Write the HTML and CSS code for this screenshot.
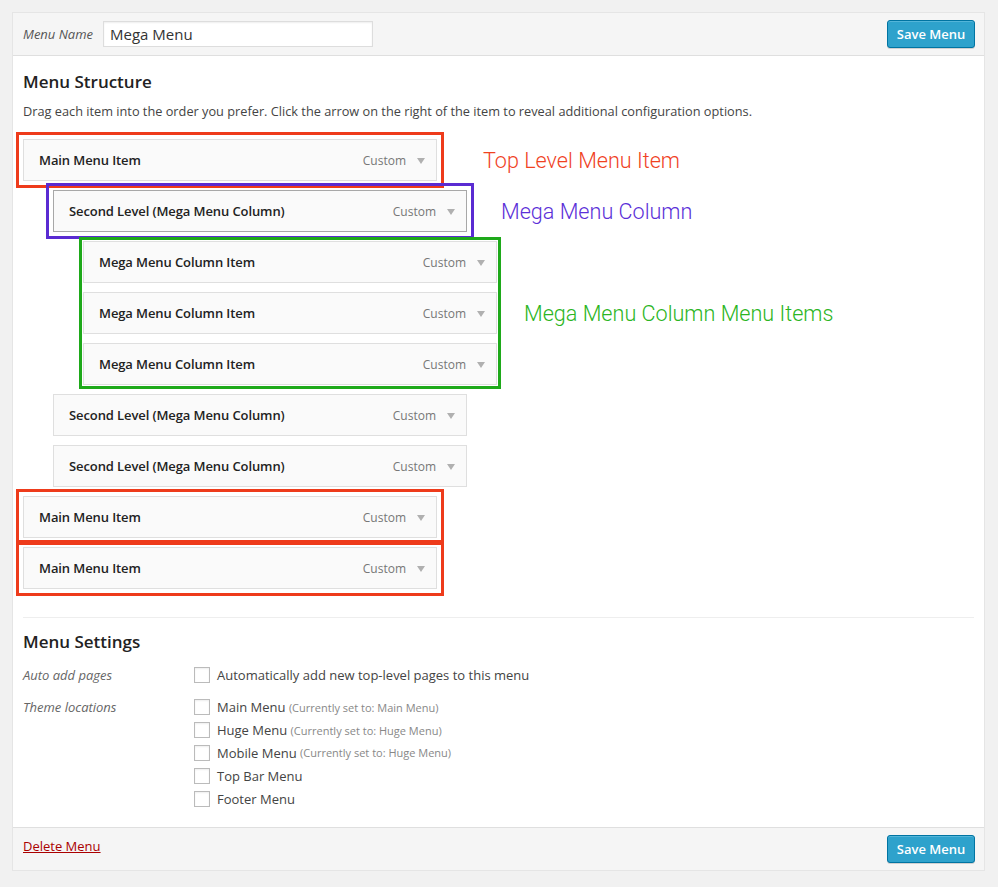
FILE: index.html
```html
<!DOCTYPE html>
<html>
<head>
<meta charset="utf-8">
<title>Menus</title>
<link rel="stylesheet" href="styles.css">
</head>
<body>
<div class="panel">
  <div class="panel-header">
    <div class="name-field">
      <label class="name-label">Menu Name</label>
      <input class="name-input" type="text" value="Mega Menu">
    </div>
    <button class="btn-primary">Save Menu</button>
  </div>

  <div class="panel-body">
    <h3 class="section-title">Menu Structure</h3>
    <p class="desc">Drag each item into the order you prefer. Click the arrow on the right of the item to reveal additional configuration options.</p>

    <div class="menu-list">
      <div class="row">
        <div class="anno anno-red">
          <div class="item"><span class="item-title">Main Menu Item</span><span class="item-type">Custom</span><span class="arrow"></span></div>
        </div>
        <span class="anno-label label-red">Top Level Menu Item</span>
      </div>

      <div class="row depth-1">
        <div class="anno anno-purple">
          <div class="item item-active"><span class="item-title">Second Level (Mega Menu Column)</span><span class="item-type">Custom</span><span class="arrow"></span></div>
        </div>
        <span class="anno-label label-purple">Mega Menu Column</span>
      </div>

      <div class="row depth-2">
        <div class="anno anno-green group">
          <div class="item"><span class="item-title">Mega Menu Column Item</span><span class="item-type">Custom</span><span class="arrow"></span></div>
          <div class="item"><span class="item-title">Mega Menu Column Item</span><span class="item-type">Custom</span><span class="arrow"></span></div>
          <div class="item"><span class="item-title">Mega Menu Column Item</span><span class="item-type">Custom</span><span class="arrow"></span></div>
        </div>
        <span class="anno-label label-green">Mega Menu Column Menu Items</span>
      </div>

      <div class="row depth-1">
        <div class="item"><span class="item-title">Second Level (Mega Menu Column)</span><span class="item-type">Custom</span><span class="arrow"></span></div>
      </div>
      <div class="row depth-1">
        <div class="item"><span class="item-title">Second Level (Mega Menu Column)</span><span class="item-type">Custom</span><span class="arrow"></span></div>
      </div>

      <div class="row">
        <div class="anno anno-red">
          <div class="item"><span class="item-title">Main Menu Item</span><span class="item-type">Custom</span><span class="arrow"></span></div>
        </div>
      </div>
      <div class="row">
        <div class="anno anno-red">
          <div class="item"><span class="item-title">Main Menu Item</span><span class="item-type">Custom</span><span class="arrow"></span></div>
        </div>
      </div>
    </div>

    <div class="settings">
      <h3 class="section-title">Menu Settings</h3>
      <div class="setting-row setting-auto">
        <div class="setting-label">Auto add pages</div>
        <div class="setting-options">
          <label class="opt"><input type="checkbox" class="cb">Automatically add new top-level pages to this menu</label>
        </div>
      </div>
      <div class="setting-row">
        <div class="setting-label">Theme locations</div>
        <div class="setting-options">
          <label class="opt"><input type="checkbox" class="cb">Main Menu <span class="note">(Currently set to: Main Menu)</span></label>
          <label class="opt"><input type="checkbox" class="cb">Huge Menu <span class="note">(Currently set to: Huge Menu)</span></label>
          <label class="opt"><input type="checkbox" class="cb">Mobile Menu <span class="note">(Currently set to: Huge Menu)</span></label>
          <label class="opt"><input type="checkbox" class="cb">Top Bar Menu</label>
          <label class="opt"><input type="checkbox" class="cb">Footer Menu</label>
        </div>
      </div>
    </div>
  </div>

  <div class="panel-footer">
    <a class="delete-link" href="#">Delete Menu</a>
    <button class="btn-primary">Save Menu</button>
  </div>
</div>
</body>
</html>
```

FILE: styles.css
```css
* { box-sizing: border-box; }

body {
  margin: 12px 13px 0 12px;
  background: #f1f1f1;
  font-family: "Open Sans", "Liberation Sans", sans-serif;
  font-size: 13px;
  color: #444;
}

.panel {
  background: #fff;
  border: 1px solid #e5e5e5;
  box-shadow: 0 1px 1px rgba(0,0,0,0.04);
}

.panel-header {
  height: 43px;
  background: #f5f5f5;
  border-bottom: 1px solid #dfdfdf;
  display: flex;
  align-items: center;
  justify-content: space-between;
  padding: 0 9px 0 10px;
}

.name-field {
  display: flex;
  align-items: center;
}

.name-label {
  width: 80px;
  font-style: italic;
  color: #555;
  font-size: 13px;
}

.name-input {
  width: 270px;
  height: 26px;
  border: 1px solid #ddd;
  background: #fff;
  box-shadow: inset 0 1px 2px rgba(0,0,0,0.07);
  font-family: "Open Sans", "Liberation Sans", sans-serif;
  font-size: 15px;
  color: #333;
  padding: 0 6px;
  outline: none;
}

.btn-primary {
  height: 28px;
  width: 88px;
  padding: 0;
  background: #2ea2cc;
  border: 1px solid #0074a2;
  border-radius: 3px;
  box-shadow: inset 0 1px 0 rgba(120,200,230,0.5), 0 1px 0 rgba(0,0,0,0.15);
  color: #fff;
  font-family: "Open Sans", "Liberation Sans", sans-serif;
  font-size: 13px;
  font-weight: 600;
  cursor: pointer;
}

.panel-body {
  padding: 15px 10px 17px 10px;
}

.section-title {
  margin: 0;
  font-size: 17px;
  font-weight: 600;
  line-height: 22px;
  color: #222;
}

.desc {
  margin: 8px 0 0 0;
  line-height: 20px;
  font-size: 12.75px;
  color: #444;
}

.menu-list {
  margin-top: 18px;
  display: flex;
  flex-direction: column;
  gap: 9px;
  padding-bottom: 28px;
  border-bottom: 1px solid #eee;
}

.row {
  display: flex;
  align-items: center;
}

.depth-1 { padding-left: 30px; }
.depth-2 { padding-left: 60px; }

.anno { outline-style: solid; outline-width: 3px; }
.anno-red { outline-color: #ee3b1b; outline-offset: 4px; }
.anno-purple { outline-color: #5a2bd2; outline-offset: 4px; }
.anno-green { outline-color: #1ea91a; outline-offset: 1px; }

.group {
  display: flex;
  flex-direction: column;
  gap: 9px;
}

.item {
  width: 414px;
  height: 42px;
  border: 1px solid #dfdfdf;
  background: #fafafa;
  display: flex;
  align-items: center;
  padding: 0 11px 0 15px;
}

.item-active { border-color: #a8a8a8; }

.item-title {
  flex: 1;
  font-weight: 600;
  color: #222;
  font-size: 13px;
  letter-spacing: -0.1px;
}

.item-type {
  color: #777;
  font-size: 12px;
  margin-right: 11px;
}

.arrow {
  width: 0;
  height: 0;
  border-left: 4px solid transparent;
  border-right: 4px solid transparent;
  border-top: 6px solid #b0b0b0;
  margin-top: 2px;
}

.anno-label {
  font-family: Roboto, "Liberation Sans", sans-serif;
  font-weight: 300;
  font-size: 21.6px;
}

.label-red { color: #f0421f; margin-left: 46px; }
.label-purple { color: #5b2fd8; margin-left: 34px; }
.label-green { color: #2bb523; margin-left: 27px; }

.settings .section-title {
  margin-top: 13px;
}

.setting-row {
  display: flex;
  margin-top: 9px;
}

.setting-row.setting-auto { margin-top: 11px; }

.setting-label {
  width: 171px;
  font-style: italic;
  color: #666;
  line-height: 23px;
}

.setting-options {
  display: flex;
  flex-direction: column;
}

.opt {
  display: flex;
  align-items: center;
  height: 22.8px;
  color: #444;
  font-size: 13px;
  white-space: pre;
}

.cb {
  -webkit-appearance: none;
  appearance: none;
  width: 16px;
  height: 16px;
  margin: 0 7px 0 0;
  border: 1px solid #bbb;
  background: #fff;
  box-shadow: inset 0 1px 2px rgba(0,0,0,0.07);
}

.note {
  font-size: 11px;
  color: #888;
}

.panel-footer {
  height: 43px;
  background: #f5f5f5;
  border-top: 1px solid #dfdfdf;
  display: flex;
  align-items: center;
  justify-content: space-between;
  padding: 0 9px 0 10px;
}

.delete-link {
  color: #a00;
  text-decoration: underline;
  font-size: 13px;
  margin-bottom: 6px;
}
```
